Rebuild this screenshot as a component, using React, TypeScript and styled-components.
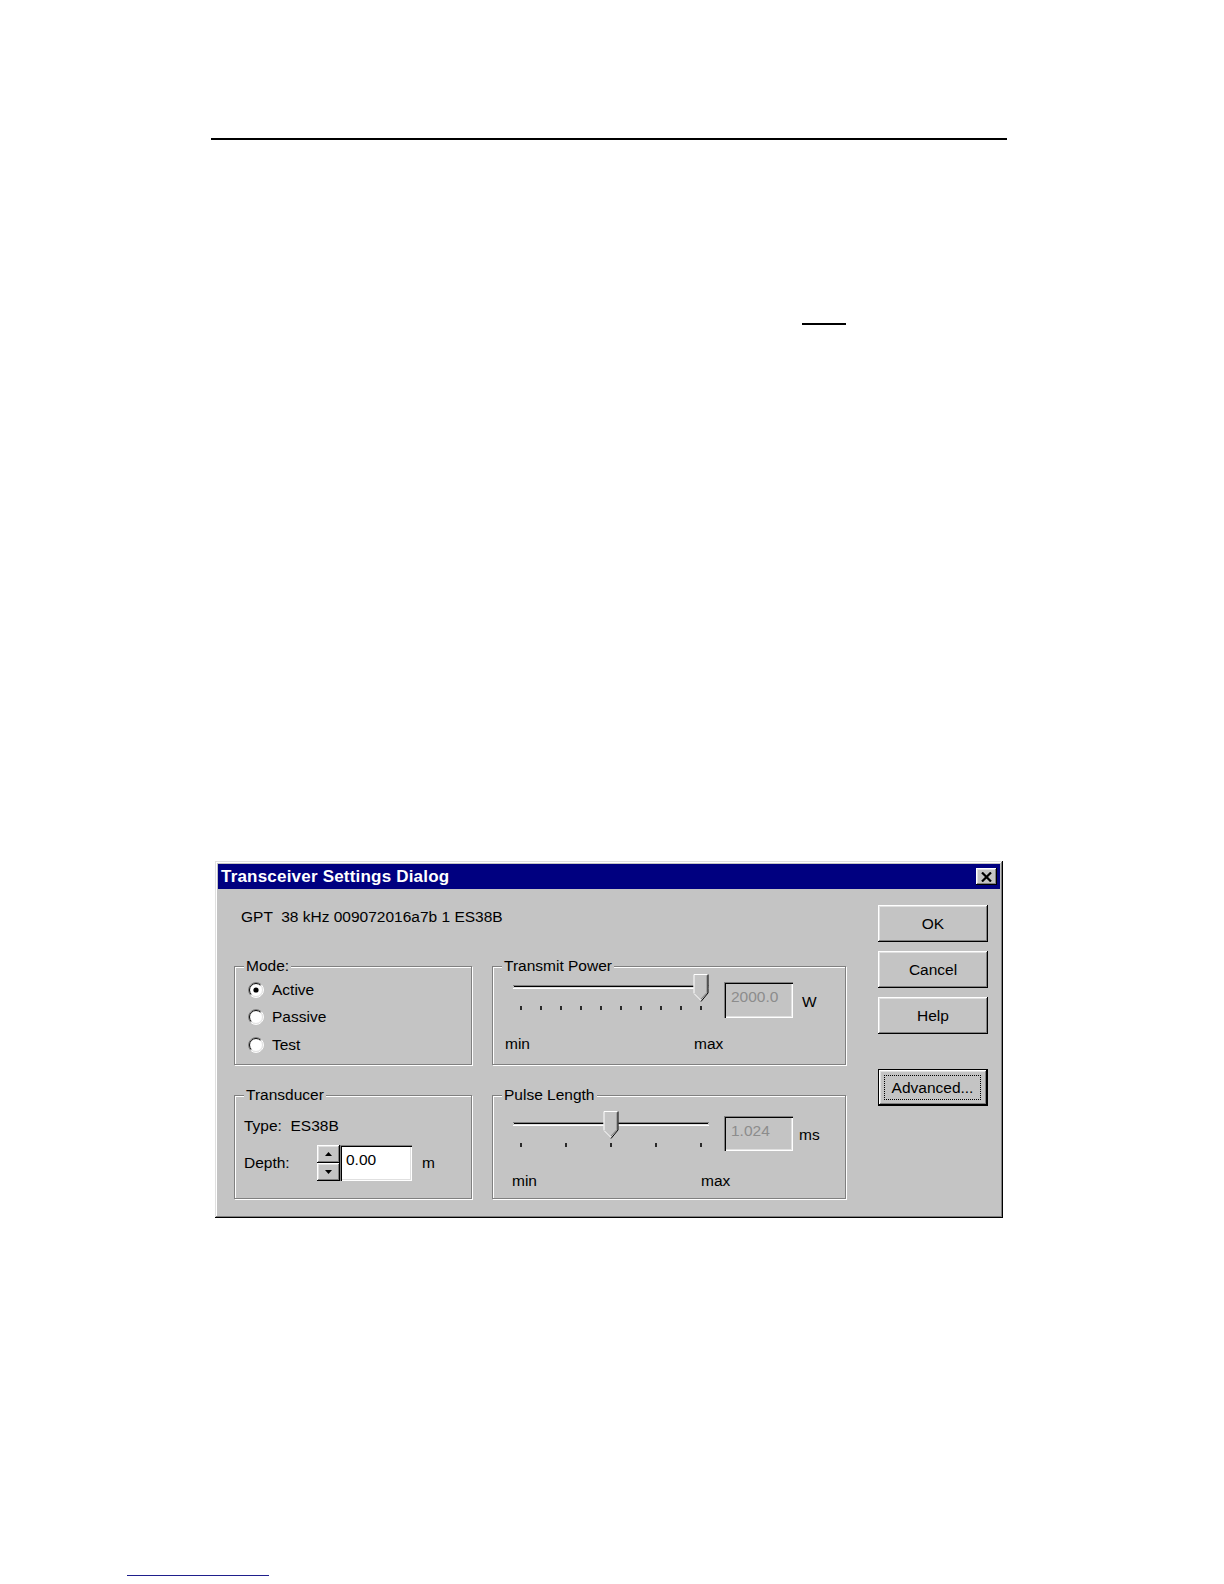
import * as React from "react";
import styled, { createGlobalStyle } from "styled-components";

const GlobalStyle = createGlobalStyle`
	* {
		box-sizing: border-box;
	}

	html,
	body {
		margin: 0;
		padding: 0;
		background: #ffffff;
	}

	body {
		font-family: "Liberation Sans", Arial, sans-serif;
		font-size: 15.5px;
		color: #000000;
	}
`;

const FACE = "#c4c4c4";

const raised = `
	box-shadow: inset -1px -1px #000000, inset 1px 1px #ffffff,
		inset -2px -2px #808080, inset 2px 2px #e0e0e0;
`;

const sunken = `
	box-shadow: inset 1px 1px #808080, inset 2px 2px #000000,
		inset -1px -1px #ffffff, inset -2px -2px #e0e0e0;
`;

const Page = styled.div`
	width: 1224px;
	min-height: 1584px;
	padding-top: 138px;

	display: flex;
	flex-direction: column;
	align-items: flex-start;
`;

const Rule = styled.div<{ $left: number; $top: number; $width: number; $thick: number; $color: string }>`
	flex-shrink: 0;

	margin-left: ${(p) => p.$left}px;
	margin-top: ${(p) => p.$top}px;

	width: ${(p) => p.$width}px;
	height: ${(p) => p.$thick}px;

	background: ${(p) => p.$color};
`;

const Dialog = styled.div`
	flex-shrink: 0;

	margin-left: 215px;
	margin-top: 536px;

	width: 788px;
	height: 357px;
	padding: 3px;

	display: flex;
	flex-direction: column;

	background: ${FACE};
	box-shadow: inset -1px -1px #000000, inset 1px 1px #e0e0e0,
		inset -2px -2px #808080, inset 2px 2px #ffffff;
`;

const TitleBar = styled.div`
	height: 25px;
	padding: 0 3px;

	display: flex;
	align-items: center;
	justify-content: space-between;

	background: #000080;
`;

const Title = styled.span`
	color: #ffffff;
	font-size: 17px;
	font-weight: bold;
	letter-spacing: 0.2px;
	line-height: 25px;
`;

const CloseButton = styled.div`
	width: 21px;
	height: 17px;

	display: flex;
	align-items: center;
	justify-content: center;

	background: ${FACE};
	${raised}
`;

const Body = styled.div`
	flex: 1;
	padding: 0 12px 0 16px;

	display: flex;
	align-items: flex-start;
	gap: 32px;
`;

const Main = styled.div`
	width: 612px;
	padding-top: 19px;
`;

const InfoLine = styled.div`
	margin-left: 7px;
	line-height: 18px;
	white-space: pre;
`;

const GroupGrid = styled.div`
	margin-top: 40px;

	display: grid;
	grid-template-columns: 238px 354px;
	grid-template-rows: 99px 104px;
	column-gap: 20px;
	row-gap: 30px;
`;

const Group = styled.div`
	position: relative;

	border: 1px solid #808080;
	box-shadow: inset 1px 1px #ffffff, 1px 1px #ffffff;
`;

const Legend = styled.span`
	position: absolute;
	top: -10px;
	left: 9px;

	padding: 0 2px;

	background: ${FACE};
	line-height: 18px;
	white-space: nowrap;
`;

const RadioList = styled.div`
	padding: 9px 0 0 13px;
`;

const RadioRow = styled.div`
	height: 27.5px;

	display: flex;
	align-items: center;
	gap: 8px;

	line-height: 18px;
`;

const SliderRow = styled.div<{ $height: number }>`
	height: ${(p) => p.$height}px;
	padding-left: 20px;

	display: flex;
	align-items: flex-start;
`;

const TrackSvg = styled.svg<{ $top: number }>`
	flex-shrink: 0;
	margin-top: ${(p) => p.$top}px;
	display: block;
`;

const ValueBox = styled.div<{ $top: number; $height: number }>`
	flex-shrink: 0;

	margin-top: ${(p) => p.$top}px;
	margin-left: 15px;

	width: 69px;
	height: ${(p) => p.$height}px;
	padding: 6px 0 0 7px;

	color: #8c8c8c;
	line-height: 18px;

	background: ${FACE};
	${sunken}
`;

const Unit = styled.span<{ $top: number; $left: number }>`
	margin-top: ${(p) => p.$top}px;
	margin-left: ${(p) => p.$left}px;
	line-height: 18px;
`;

const ScaleRow = styled.div<{ $top: number; $left: number }>`
	margin-top: ${(p) => p.$top}px;
	padding-left: ${(p) => p.$left}px;

	display: flex;
	line-height: 18px;
`;

const ScaleCell = styled.span`
	width: 189px;
`;

const TransducerBody = styled.div`
	padding: 21px 0 0 9px;
`;

const Line = styled.div`
	line-height: 18px;
	white-space: pre;
`;

const DepthRow = styled.div`
	margin-top: 10px;
	height: 36px;

	display: flex;
	align-items: flex-start;
`;

const FieldLabel = styled.span`
	width: 73px;
	margin-top: 9px;
	line-height: 18px;
`;

const Spin = styled.div`
	width: 23px;
	height: 36px;

	display: flex;
	flex-direction: column;
`;

const SpinButton = styled.div`
	flex: 1;

	display: flex;
	align-items: center;
	justify-content: center;

	background: ${FACE};
	${raised}
`;

const DepthInput = styled.div`
	width: 72px;
	height: 36px;
	padding: 6px 0 0 6px;

	line-height: 18px;

	background: #ffffff;
	${sunken}
`;

const ButtonColumn = styled.div`
	width: 110px;
	margin-top: 16px;

	display: flex;
	flex-direction: column;
	gap: 9px;
`;

const PushButton = styled.div<{ $isDefault?: boolean; $gap?: number }>`
	height: 37px;
	margin-top: ${(p) => p.$gap || 0}px;
	padding: ${(p) => (p.$isDefault ? "6px 7px 6px 6px" : "0")};

	display: flex;
	align-items: center;
	justify-content: center;

	background: ${FACE};
	line-height: 18px;

	${(p) =>
		p.$isDefault
			? `box-shadow: inset 0 0 0 1px #000000, inset -2px -2px #000000, inset 2px 2px #ffffff,
		inset -3px -3px #808080, inset 3px 3px #e0e0e0;`
			: raised}
`;

const FocusRing = styled.span`
	width: 100%;
	height: 100%;

	display: flex;
	align-items: center;
	justify-content: center;

	border: 1px dotted #000000;
`;

const Radio = ({ checked }: { checked?: boolean }): JSX.Element => {
	const arc = (r: number, half: "tl" | "br") => {
		const d = r * 0.7071;
		const a = { x: 8 - d, y: 8 + d };
		const b = { x: 8 + d, y: 8 - d };
		const [from, to] = half === "tl" ? [a, b] : [b, a];
		return `M ${from.x} ${from.y} A ${r} ${r} 0 0 1 ${to.x} ${to.y}`;
	};

	return (
		<svg width={16} height={16} viewBox="0 0 16 16">
			<circle cx={8} cy={8} r={7} fill="#ffffff" />
			<path d={arc(7.5, "tl")} stroke="#808080" strokeWidth={1} fill="none" />
			<path d={arc(7.5, "br")} stroke="#ffffff" strokeWidth={1} fill="none" />
			<path d={arc(6.5, "tl")} stroke="#000000" strokeWidth={1} fill="none" />
			<path d={arc(6.5, "br")} stroke="#e0e0e0" strokeWidth={1} fill="none" />
			{checked && <circle cx={8} cy={8} r={2.6} fill="#000000" />}
		</svg>
	);
};

const Trackbar = (props: { ticks: number; value: number; top: number }): JSX.Element => {
	const { ticks, value, top } = props;
	const marks = Array.from({ length: ticks }, (_, i) => Math.round(8 + (180 * i) / (ticks - 1)));
	const cx = 8 + 180 * value;

	return (
		<TrackSvg $top={top} width={196} height={38} viewBox="0 0 196 38">
			<rect x={0} y={11} width={196} height={1} fill="#808080" />
			<rect x={1} y={12} width={194} height={1} fill="#000000" />
			<rect x={1} y={13} width={194} height={1} fill="#e0e0e0" />
			<rect x={0} y={14} width={196} height={1} fill="#ffffff" />
			{marks.map((x) => (
				<rect key={`tick_${x}`} x={x - 1} y={32} width={2} height={4} fill="#2a2a2a" />
			))}
			<polygon
				points={`${cx - 7.5},0 ${cx + 7.5},0 ${cx + 7.5},19 ${cx},28 ${cx - 7.5},19`}
				fill={FACE}
			/>
			<path d={`M ${cx - 7} 19 L ${cx - 7} 0.5 L ${cx + 7} 0.5`} stroke="#ffffff" fill="none" />
			<path d={`M ${cx - 7} 19.5 L ${cx} 26.5`} stroke="#ffffff" fill="none" />
			<path d={`M ${cx + 6} 1.5 L ${cx + 6} 18.5 L ${cx} 25`} stroke="#808080" fill="none" />
			<path d={`M ${cx + 7} 0.5 L ${cx + 7} 19 L ${cx} 27.5`} stroke="#000000" fill="none" />
		</TrackSvg>
	);
};

const SliderGroup = (props: {
	title: string;
	value: string;
	unit: string;
	ticks: number;
	position: number;
	layout: {
		track: number;
		box: number;
		boxHeight: number;
		unitTop: number;
		unitLeft: number;
		row: number;
		scaleTop: number;
		scaleLeft: number;
	};
}): JSX.Element => {
	const { title, value, unit, ticks, position, layout } = props;

	return (
		<Group>
			<Legend>{title}</Legend>
			<SliderRow $height={layout.row}>
				<Trackbar ticks={ticks} value={position} top={layout.track} />
				<ValueBox $top={layout.box} $height={layout.boxHeight}>
					{value}
				</ValueBox>
				<Unit $top={layout.unitTop} $left={layout.unitLeft}>
					{unit}
				</Unit>
			</SliderRow>
			<ScaleRow $top={layout.scaleTop} $left={layout.scaleLeft}>
				<ScaleCell>min</ScaleCell>
				<span>max</span>
			</ScaleRow>
		</Group>
	);
};

const Arrow = ({ up }: { up?: boolean }): JSX.Element => (
	<svg width={7} height={4} viewBox="0 0 7 4">
		<polygon points={up ? "3.5,0 7,4 0,4" : "0,0 7,0 3.5,4"} fill="#000000" />
	</svg>
);

const modes = [
	{ label: "Active", checked: true },
	{ label: "Passive", checked: false },
	{ label: "Test", checked: false },
];

const App = (): JSX.Element => (
	<>
		<GlobalStyle />
		<Page>
			<Rule $left={211} $top={0} $width={796} $thick={2} $color="#000000" />
			<Rule $left={802} $top={183} $width={44} $thick={2} $color="#000000" />

			<Dialog>
				<TitleBar>
					<Title>Transceiver Settings Dialog</Title>
					<CloseButton>
						<svg width={11} height={10} viewBox="0 0 11 10">
							<path d="M1 0.5 L10 9.5 M10 0.5 L1 9.5" stroke="#000000" strokeWidth={2.2} />
						</svg>
					</CloseButton>
				</TitleBar>

				<Body>
					<Main>
						<InfoLine>GPT  38 kHz 009072016a7b 1 ES38B</InfoLine>
						<GroupGrid>
							<Group>
								<Legend>Mode:</Legend>
								<RadioList>
									{modes.map((mode) => (
										<RadioRow key={mode.label}>
											<Radio checked={mode.checked} />
											<span>{mode.label}</span>
										</RadioRow>
									))}
								</RadioList>
							</Group>

							<SliderGroup
								title="Transmit Power"
								value="2000.0"
								unit="W"
								ticks={10}
								position={1}
								layout={{
									track: 7,
									box: 15,
									boxHeight: 36,
									unitTop: 26,
									unitLeft: 9,
									row: 51,
									scaleTop: 17,
									scaleLeft: 12,
								}}
							/>

							<Group>
								<Legend>Transducer</Legend>
								<TransducerBody>
									<Line>Type:  ES38B</Line>
									<DepthRow>
										<FieldLabel>Depth:</FieldLabel>
										<Spin>
											<SpinButton>
												<Arrow up />
											</SpinButton>
											<SpinButton>
												<Arrow />
											</SpinButton>
										</Spin>
										<DepthInput>0.00</DepthInput>
										<Unit $top={9} $left={10}>
											m
										</Unit>
									</DepthRow>
								</TransducerBody>
							</Group>

							<SliderGroup
								title="Pulse Length"
								value="1.024"
								unit="ms"
								ticks={5}
								position={0.5}
								layout={{
									track: 15,
									box: 20,
									boxHeight: 35,
									unitTop: 30,
									unitLeft: 6,
									row: 55,
									scaleTop: 21,
									scaleLeft: 19,
								}}
							/>
						</GroupGrid>
					</Main>

					<ButtonColumn>
						<PushButton>OK</PushButton>
						<PushButton>Cancel</PushButton>
						<PushButton>Help</PushButton>
						<PushButton $isDefault $gap={26}>
							<FocusRing>Advanced...</FocusRing>
						</PushButton>
					</ButtonColumn>
				</Body>
			</Dialog>

			<Rule $left={127} $top={357} $width={142} $thick={1} $color="#1f1f8c" />
		</Page>
	</>
);

export default App;
